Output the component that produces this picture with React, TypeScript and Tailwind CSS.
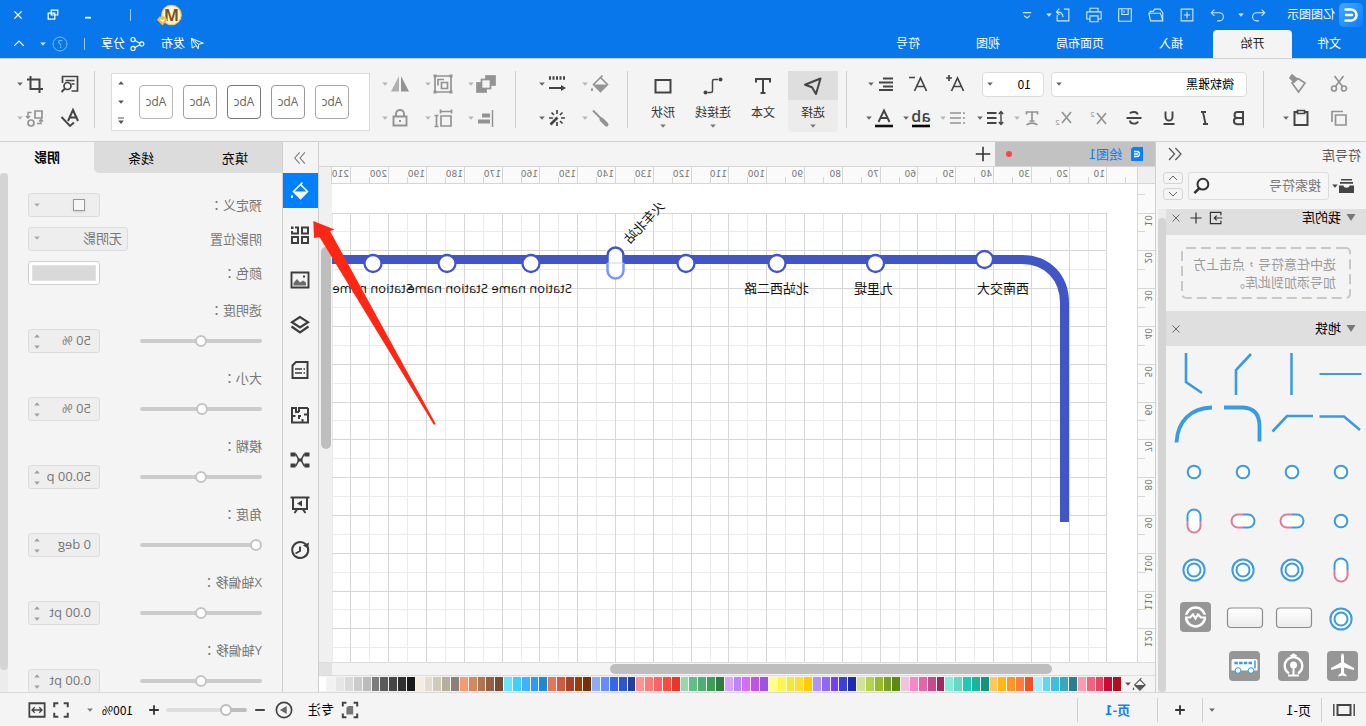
import React from 'react';

type Kids = { children?: React.ReactNode; className?: string };

const Ico = ({ children, className = 'size-5' }: Kids) => (
  <svg viewBox="0 0 20 20" fill="none" stroke="currentColor" strokeWidth="1.7" className={`shrink-0 overflow-visible ${className}`} aria-hidden="true">
    {children}
  </svg>
);

const Caret = ({ className = '' }: { className?: string }) => (
  <svg viewBox="0 0 8 8" className={`size-2 shrink-0 ${className}`} fill="currentColor" aria-hidden="true">
    <path d="M1.2 2.5h5.6L4 5.8z" />
  </svg>
);

const Colon = () => <span className="font-['Noto_Sans_CJK_TC']">：</span>;

const Tool = ({ label, caret, off, children }: { label: string; caret?: boolean; off?: boolean; children: React.ReactNode }) => (
  <button type="button" aria-label={label} className={`flex h-5 items-center gap-px ${off ? 'text-[#939393]' : 'text-[#444]'}`}>
    <Ico>{children}</Ico>
    {caret && <Caret className={off ? 'text-[#b5b5b5]' : 'text-[#666]'} />}
  </button>
);

const Sep = ({ className = '' }: { className?: string }) => <div className={`h-[57px] w-px shrink-0 bg-[#cfcfcf] ${className}`} />;

const Bucket = () => (
  <>
    <path d="M9.5 3.5 2.5 10.5 9.5 17.5 16.5 10.5 7.5 1.5" strokeWidth="1.6" />
    <path d="M3 10.5h13l-6.500 6.500z" fill="currentColor" stroke="none" />
    <path d="M18 13.500c1.300 1.800 1.600 3.500 0 3.800-1.600-.3-1.300-2 0-3.800z" fill="currentColor" stroke="none" />
  </>
);

const Glyph = ({ children, size = 17, x = 10, y = 16, weight = 400 }: { children: React.ReactNode; size?: number; x?: number; y?: number; weight?: number }) => (
  <text x={x} y={y} fontSize={size} fontWeight={weight} textAnchor="middle" fill="currentColor" stroke="none">
    {children}
  </text>
);

function TitleBar() {
  return (
    <header className="shrink-0 border-b border-[#d3d3d3] bg-[#0877ec] text-xs text-white">
      <div className="flex h-[30px] items-center">
        <svg viewBox="0 0 24 24" className="ml-[3px] mr-1 size-6" aria-hidden="true">
          <defs>
            <linearGradient id="lg" x1="0" y1="1" x2="1" y2="0">
              <stop offset="0" stopColor="#0a7bff" />
              <stop offset="1" stopColor="#45a9ff" />
            </linearGradient>
          </defs>
          <rect width="24" height="24" rx="5" fill="url(#lg)" />
          <path d="M17.500 6.500h-5.500a5.500 5.500 0 0 0 0 11h5.500M11 12h6" fill="none" stroke="#fff" strokeWidth="2.600" strokeLinecap="round" />
        </svg>
        <h1 className="w-[68px]">亿图图示</h1>
        <div className="flex items-center text-[#d6e8fc]">
          <button type="button" aria-label="撤销" className="flex w-10 items-center gap-1">
            <Ico className="size-[18px]"><path d="M6 4 2.500 7.500 6 11M3 7.500h8.500a4.500 4.500 0 0 1 0 9H9" strokeWidth="1.200" /></Ico>
            <Caret />
          </button>
          {[
            ['重做', 'M14 4l3.500 3.500L14 11M17 7.500H8.500a4.500 4.500 0 0 0 0 9H11'],
            ['新建', 'M3.500 3.500h13v13h-13zM10 6.500v7M6.500 10h7'],
            ['打开', 'M2.500 16.500v-9l3-4h6l1.500 2.500h3.500v2M2.500 16.500 5 8h13l-2 8.500z'],
            ['保存', 'M3 3h14v14H3zM6.500 3v6.500h7V3M11 5v2.500'],
            ['打印', 'M5.500 6.500v-4h9v4M5.500 14.500H2v-8h16v8h-3.500M5.500 11h9v6.500h-9z'],
            ['导出', 'M9 3.500H3.500v13h13V10M17.500 6.500 14 3M17.500 6.500 14 10M17 6.500c-4 0-7 1-7 6'],
          ].map(([name, d]) => (
            <button key={name} type="button" aria-label={name} className="w-[31px]">
              <Ico className="size-[18px]"><path d={d} strokeWidth="1.200" /></Ico>
            </button>
          ))}
          <Caret className="-ml-3" />
          <button type="button" aria-label="自定义快速访问" className="ml-3">
            <Ico className="size-3"><path d="M3 6h14M5 11l5 4 5-4" strokeWidth="2" /></Ico>
          </button>
        </div>
        <div className="ml-auto flex items-center">
          <svg viewBox="0 0 26 22" className="h-[22px] w-[26px]" aria-label="账户">
            <circle cx="10.500" cy="11" r="9.700" fill="#fff5dc" stroke="#f5ca6b" strokeWidth="1.300" />
            <text x="10.500" y="16.500" textAnchor="middle" fontSize="16" fontWeight="700" fill="#7c5518">M</text>
            <path d="M16.500 12.500h6l2.500 3.500-5.500 5.500-5-5.500z" fill="#f7b93c" />
            <path d="m17.500 15.500 2 2 2-2" fill="none" stroke="#fff" strokeWidth="1.200" />
          </svg>
          <span className="ml-[25px] h-3 w-px bg-[#9cc9f8]" />
          <button type="button" aria-label="最小化" className="ml-[36px]"><Ico className="size-3"><path d="M5 14.500h10" strokeWidth="3" /></Ico></button>
          <button type="button" aria-label="还原" className="ml-[23px]"><Ico className="size-3"><path d="M2 2h11v8H2zM7 7h11v10H7z" strokeWidth="2" /></Ico></button>
          <button type="button" aria-label="关闭" className="mr-3 ml-[23px]"><Ico className="size-3"><path d="m4 4 12 12M16 4 4 16" strokeWidth="2.200" /></Ico></button>
        </div>
      </div>
      <nav className="flex h-7 items-center">
        <a href="#file" className="w-[74px] text-center">文件</a>
        <a href="#home" className="flex h-full w-[79px] items-center justify-center rounded-t-sm bg-[#f4f4f4] text-[#222]">开始</a>
        <a href="#insert" className="w-[84px] text-center">插入</a>
        <a href="#layout" className="w-[98px] text-center">页面布局</a>
        <a href="#view" className="w-[86px] text-center">视图</a>
        <a href="#symbol" className="w-[74px] text-center">符号</a>
        <div className="ml-auto flex items-center">
          <button type="button" className="flex items-center gap-1">
            <Ico className="size-4"><path d="M2 9 17 3l-1 12-5-3-2.500 4-.5-5.500zM17 3l-9 7.500M11 12l6-9" strokeWidth="1.200" /></Ico>发布
          </button>
          <button type="button" className="ml-3 flex items-center gap-1">
            <Ico className="ml-1 size-4"><circle cx="4" cy="10" r="2.600" strokeWidth="1.400" /><circle cx="15" cy="4.500" r="2.600" strokeWidth="1.400" /><circle cx="15" cy="15.500" r="2.600" strokeWidth="1.400" /><path d="m6.500 9 6-3.300M6.500 11l6 3.300" strokeWidth="1.400" /></Ico>分享
          </button>
          <span className="ml-4 h-3 w-px bg-[#9cc9f8]" />
          <button type="button" aria-label="帮助" className="ml-4 flex items-center gap-[5px] text-[#d6e8fc]">
            <svg viewBox="0 0 16 16" className="size-4" fill="none" stroke="#7db9f6"><circle cx="8" cy="8" r="7" /><text x="8" y="12" textAnchor="middle" fontSize="10" fill="#a8d0f8" stroke="none">?</text></svg>
            <Caret />
          </button>
          <button type="button" aria-label="收起" className="mr-[13px] ml-[14px]"><Ico className="size-3"><path d="m2 13 8-8 8 8" strokeWidth="2" /></Ico></button>
        </div>
      </nav>
    </header>
  );
}

const BigTool = ({ label, caret = true, active, children }: { label: string; caret?: boolean; active?: boolean; children: React.ReactNode }) => (
  <button type="button" className={`flex h-[61px] w-[50px] flex-col items-center rounded-sm text-xs text-[#333] ${active ? 'bg-[#ececec]' : ''}`}>
    <span className={`flex h-[29px] w-full shrink-0 items-center justify-center text-[#444] ${active ? 'bg-[#dedede]' : ''}`}><Ico>{children}</Ico></span>
    <span className="mt-1 leading-[18px]">{label}</span>
    {caret && <Caret className="text-[#777]" />}
  </button>
);

function Ribbon() {
  return (
    <div className="flex h-[83px] shrink-0 items-start border-b border-[#d0d0d0] bg-[#f4f4f4] pt-3">
      <div className="flex flex-col gap-[11px] pl-[17px]">
        <div className="flex h-[26px] items-center gap-[21px]">
          <Tool label="剪切" off><circle cx="5" cy="14.500" r="2.500" /><circle cx="15" cy="14.500" r="2.500" /><path d="m6.500 12.500 8-10.500M13.500 12.500l-8-10.500" /></Tool>
          <Tool label="格式刷" off><path d="m3 9 7-4.500 6 4.500-6.500 9z" /><path d="m11 5 5-4 2 3-4 4z" fill="currentColor" /></Tool>
        </div>
        <div className="flex items-center gap-[18px]">
          <Tool label="复制" off><path d="M3 7h10.500v10H3zM6 3.500h11v10.500" /></Tool>
          <Tool label="粘贴" caret><path d="M6.500 4H3.500v13h13V4h-3" strokeWidth="2" /><path d="M6.500 2.500h7v3h-7z" /></Tool>
        </div>
      </div>
      <Sep className="ml-[18px]" />
      <div className="ml-4 flex flex-col gap-[11px]">
        <div className="flex h-[26px] items-center">
          <div className="relative w-[196px]">
            <select aria-label="字体" className="h-[25px] w-full appearance-none rounded-sm border border-[#dcdcdc] bg-white pl-3 text-xs text-black"><option>微软雅黑</option></select>
            <Caret className="absolute top-[9px] right-1 text-[#666]" />
          </div>
          <div className="relative ml-[7px] w-[62px]">
            <select aria-label="字号" className="h-[25px] w-full appearance-none rounded-sm border border-[#dcdcdc] bg-white pl-3 font-['Noto_Sans_CJK_SC'] text-xs text-black"><option>10</option></select>
            <Caret className="absolute top-[9px] right-1 text-[#666]" />
          </div>
          <div className="ml-[17px] flex gap-[17px]">
            <Tool label="增大字号"><path d="M1.500 17 7.500 4l6 13M4 12.500h7.500M13 4h6M16 1v6" /></Tool>
            <Tool label="减小字号"><path d="M1.500 17 7.500 4l6 13M4 12.500h7.500M13 3.500h6" /></Tool>
          </div>
          <div className="ml-3"><Tool label="对齐" caret><path d="M3 4.500h10M3 8.500h14M3 12.500h10M3 16h14" strokeWidth="1.900" /></Tool></div>
        </div>
        <div className="flex items-center">
          <div className="ml-[-2px] flex gap-[15px]">
            <Tool label="加粗"><path d="M6 4h5.500a2.700 2.700 0 0 1 0 6H6zM6 10h6a3 3 0 0 1 0 6.200H6z" strokeWidth="2" /></Tool>
            <Tool label="斜体"><path d="M8 4h5M6 16h5M11 4l-2.500 12" strokeWidth="1.900" /></Tool>
            <Tool label="下划线"><path d="M6.500 3.500V9a3.500 3.500 0 0 0 7 0V3.500M4.500 16h11" strokeWidth="1.900" /></Tool>
            <Tool label="删除线"><path d="M14 5.500C13 3.500 6.500 3 6.500 6.500M2.500 10h15M6 13.500c1 3 8 3 8-1" strokeWidth="1.900" /></Tool>
            <Tool label="上标" off><path d="m3 5 9 11M12 5 3 16" /><Glyph size={8} x={16.500} y={9}>2</Glyph></Tool>
            <Tool label="下标" off><path d="m3 4 9 11M12 4 3 15" /><Glyph size={8} x={16.500} y={17}>2</Glyph></Tool>
          </div>
          <div className="ml-3 flex gap-2">
            <Tool label="文字效果" caret off><path d="M4.500 6.500V4h11v2.500M10 4v9M7.500 13h5M4.500 17c2.500-2.500 8.500-2.500 11 0" /></Tool>
            <Tool label="行距" caret><path d="M8.500 5H18M8.500 10H18M8.500 15H18" strokeWidth="2" /><path d="M4 3.500v13M1.800 6 4 3.500 6.200 6M1.800 14 4 16.500 6.200 14" strokeWidth="1.400" /></Tool>
            <Tool label="项目符号" caret off><path d="M7 5h11M7 10h11M7 15h11" /><path d="M3 5h2M3 10h2M3 15h2" /></Tool>
            <Tool label="突出显示" caret><Glyph size={16} y={14} weight={600}>ab</Glyph><path d="M1 18h18" stroke="#000" strokeWidth="2.600" /></Tool>
            <Tool label="字体颜色" caret><path d="M4.500 14 10 2.500 15.500 14M6.500 10h7" strokeWidth="1.900" /><path d="M1 18h18" stroke="#111" strokeWidth="2.600" /></Tool>
          </div>
        </div>
      </div>
      <Sep className="ml-[18px]" />
      <div className="ml-2 flex">
        <BigTool label="选择" active><path d="m2.500 2.500 15.500 6.200-7 2.500L7 18z" strokeWidth="2" strokeLinejoin="round" /></BigTool>
        <BigTool label="文本" caret={false}><path d="M3 6.500V3h14v3.500M10 3v14M7.500 17h5" strokeWidth="2" /></BigTool>
        <BigTool label="连接线"><path d="M5 3.500h4q1.500 0 1.500 1.500v10q0 1.500 1.500 1.500h3.500" strokeWidth="1.500" /><circle cx="2.500" cy="3.500" r="2" fill="currentColor" stroke="none" /><circle cx="17.500" cy="16.500" r="2" fill="currentColor" stroke="none" /></BigTool>
        <BigTool label="形状"><path d="M2.500 4h15v12.500h-15z" strokeWidth="2" /></BigTool>
      </div>
      <Sep className="ml-[10px]" />
      <div className="ml-[17px] flex flex-col gap-[11px]">
        <div className="flex h-[26px] items-center gap-[14px]">
          <Tool label="填充" caret off><Bucket /></Tool>
          <Tool label="线条样式" caret><path d="M2 4h16" strokeWidth="3.500" strokeDasharray="2 1.500" /><path d="M5 14h13" strokeWidth="2" /><path d="m1 14 5-3v6z" fill="currentColor" stroke="none" /></Tool>
        </div>
        <div className="flex items-center gap-[14px]">
          <Tool label="线条" caret off><path d="M17 2.500 8 11.500" strokeWidth="2" /><path d="m3.500 16.500 5-5" strokeWidth="4" strokeLinecap="round" /></Tool>
          <Tool label="美化" caret><path d="M10 2v4M10 14v4M2 10h4M14 10h4M4.500 4.500l2.500 2.500M15.500 4.500 13 7M4.500 15.500 7 13" /><path d="m9.500 9.500 7 7" strokeWidth="2.600" /></Tool>
        </div>
      </div>
      <Sep className="ml-[22px]" />
      <div className="ml-[19px] flex flex-col gap-[11px]">
        <div className="flex h-[26px] items-center gap-[14px]">
          <Tool label="排列" caret off><rect x="1" y="2" width="9" height="9" fill="currentColor" /><rect x="10" y="9" width="9" height="9" fill="currentColor" /><rect x="5.500" y="5.500" width="9" height="9" fill="#f4f4f4" /></Tool>
          <Tool label="组合" caret off><path d="M2 2h16v16H2zM5.500 8.500h6v6h-6zM9 5.500h6v6" /><path d="M.5.500h3v3h-3zM16.500.500h3v3h-3zM.5 16.500h3v3h-3zM16.500 16.500h3v3h-3z" fill="currentColor" stroke="none" /></Tool>
          <Tool label="翻转" caret off><path d="M9 2v15.500H1z" fill="currentColor" stroke="none" /><path d="M11 2v15.500h8z" fill="currentColor" stroke="none" opacity=".7" /></Tool>
        </div>
        <div className="flex items-center gap-[14px]">
          <Tool label="对齐" caret off><path d="M3.500 2v17" strokeWidth="1.500" /><path d="M6 7.500h8M6 13.500h12" strokeWidth="4" /></Tool>
          <Tool label="大小" caret off><path d="M2 8h10v10H2zM1.500 3.500h11M1.500 1.500v4M12.500 1.500v4M16.500 7.500v11M14.500 7.500h4M14.500 18.500h4" /></Tool>
          <Tool label="锁定" caret off><path d="M3.500 8.500h13v9h-13zM6 8.500V5.500a4 3.500 0 0 1 8 0v3" strokeWidth="1.900" /><path d="M9 12h2v2H9z" fill="currentColor" stroke="none" /></Tool>
        </div>
      </div>
      <div className="mt-[2px] ml-[11px] flex h-[58px] flex-1 items-center border border-[#dcdcdc] bg-white pl-5">
        <div className="flex gap-[10px]">
          {['border-[#a8a8a8]', 'border-[#999]', 'border-[#777]', 'border-[#a0a0a0]', 'border-[#b5b5b5]'].map((c) => (
            <button key={c} type="button" className={`size-[34px] rounded-[4px] border text-xs text-[#666] ${c}`}>Abc</button>
          ))}
        </div>
        <div className="mr-[5px] ml-auto flex flex-col gap-[11px] text-[#555]">
          <Caret className="rotate-180" />
          <Caret />
          <svg viewBox="0 0 8 8" className="size-2" fill="currentColor"><path d="M1 .5h6v1H1zM1.200 3.500h5.600L4 7z" /></svg>
        </div>
      </div>
      <Sep className="ml-4" />
      <div className="mr-[16px] ml-[14px] flex flex-col gap-[11px]">
        <div className="flex h-[26px] items-center gap-[15px]">
          <Tool label="查找"><path d="M17.500 9V2.500h-15v14.500h6M5.500 6.500h9M5.500 10h3" /><circle cx="12.500" cy="12" r="3.500" /><path d="m15 14.500 3.500 3.500" strokeWidth="2" /></Tool>
          <Tool label="裁剪" caret><path d="M2 15h12.500V2M5.500 19V5.500H18" strokeWidth="2" /></Tool>
        </div>
        <div className="flex items-center gap-[15px]">
          <Tool label="拼写检查"><path d="m2 13 5-11 5 11M4 9.500h6" strokeWidth="2" /><path d="m6 14.500 4 3.500 8.500-9" strokeWidth="1.900" /></Tool>
          <Tool label="替换" caret off><path d="M3 3h7v7H3z" /><circle cx="14" cy="15" r="3" /><path d="M13.500 4.500H17v5M15 8l2 2 2-2M8 15.500H4V12M2 13.500l2-2 2 2" strokeWidth="1.400" /></Tool>
        </div>
      </div>
    </div>
  );
}

const B = '#3a9be0';
const P = '#e07a9c';
const Ring = () => <circle cx="24" cy="24" r="6.300" fill="#fff" stroke={B} strokeWidth="2" />;
const Double = () => (<><circle cx="24" cy="24" r="10.600" fill="#fff" stroke={B} strokeWidth="2" /><circle cx="24" cy="24" r="6.500" fill="#fff" stroke={B} strokeWidth="2" /></>);
const PillH = () => (<><path d="M24 17.500h-5a6.500 6.500 0 0 0 0 13h5" fill="#fff" stroke={B} strokeWidth="2" /><path d="M24 17.500h5a6.500 6.500 0 0 1 0 13h-5" fill="#fff" stroke={P} strokeWidth="2" /></>);
const PillV = () => (<><path d="M17.500 24v-5a6.500 6.500 0 0 1 13 0v5" fill="#fff" stroke={B} strokeWidth="2" /><path d="M17.500 24v5a6.500 6.500 0 0 0 13 0v-5" fill="#fff" stroke={P} strokeWidth="2" /></>);
const Poly = ({ d, w = 2.6 }: { d: string; w?: number }) => <path d={d} fill="none" stroke={B} strokeWidth={w} />;
const Plate = () => (<><rect x="4.500" y="13" width="35" height="19.500" rx="3.500" fill="url(#plate)" stroke="#8c8c8c" strokeWidth="1.200" /></>);
const Tile = ({ children }: Kids) => (<><rect x="7" y="7" width="31" height="30" rx="4" fill="#969696" />{children}</>);

const SYMBOLS: [string, React.ReactNode][] = [
  ['横线', <Poly d="M3.500 24h42" w={2} />],
  ['竖线', <Poly d="M24.500 3v42" w={2.500} />],
  ['上折线', <Poly d="M31 45V20L16 4" />],
  ['下折线', <Poly d="M32 3v29L16 43" />],
  ['右折线', <Poly d="M45.500 17.500H21L5 31" />],
  ['左折线', <Poly d="M43.500 32.500 29 17H3" />],
  ['圆角线', <Poly d="M43 8.500H24Q7.500 9.500 7.500 27v15.500" w={3.800} />],
  ['弧线', <Poly d="M41.500 43.500C40.500 22 27 9 6 8.500" w={3.800} />],
  ['站点一', <Ring />], ['站点二', <Ring />], ['站点三', <Ring />], ['站点四', <Ring />], ['站点五', <Ring />],
  ['换乘站一', <PillH />], ['换乘站二', <PillH />], ['换乘站三', <PillV />], ['换乘站四', <PillV />],
  ['双环一', <Double />], ['双环二', <Double />], ['双环三', <Double />], ['双环四', <Double />],
  ['标牌一', <Plate />], ['标牌二', <Plate />],
  ['地铁一', <Tile><circle cx="22.500" cy="22" r="9.500" fill="none" stroke="#fff" strokeWidth="2.500" /><path d="M10 21.500h5M30 21.500h5" stroke="#969696" strokeWidth="3.500" /><path d="M12 22.500h5l3-3 2.500 4 2.500-4 3 3h5" fill="none" stroke="#fff" strokeWidth="2.200" /></Tile>],
  ['机场', <Tile><path d="M22.500 9.500c1.200 0 1.500 2 1.500 4v5l10 5.500v2l-10-2.500v5.500l2.500 2v1.500l-4-1-4 1v-1.500l2.500-2v-5.500l-10 2.500v-2l10-5.500v-5c0-2 .3-4 1.500-4z" fill="#fff" /></Tile>],
  ['地铁二', <Tile><path d="M18 29.500a8.800 8.800 0 1 1 9 0M19.500 12.500l3-1.800 3 1.800" fill="none" stroke="#fff" strokeWidth="2.300" /><circle cx="22.500" cy="21" r="3.500" fill="#fff" /><path d="M21.500 23h2v8h-2zM17 30.500h11v2H17z" fill="#fff" /></Tile>],
  ['公交', <Tile><path d="M9.500 17q0-2 2-2h22q2 0 2 2v9.500h-26z" fill="#fff" /><path d="M12 16.500v8" stroke={B} strokeWidth="1.500" /><path d="M15 19h18" stroke={B} strokeWidth="2.500" strokeDasharray="3.500 1.200" /><circle cx="16" cy="26.500" r="2.800" fill="#fff" stroke={B} /><circle cx="29" cy="26.500" r="2.800" fill="#fff" stroke={B} /></Tile>],
];

const SectionHead = ({ title, className, children }: { title: string; className: string; children?: React.ReactNode }) => (
  <div className={`flex items-center bg-[#dfdfdf] pr-[3px] pl-[10px] text-[13px] text-black ${className}`}>
    <svg viewBox="0 0 10 10" className="mr-[5px] size-[10px]" fill="#777"><path d="M.5 1h9L5 8z" /></svg>
    <h3>{title}</h3>
    <div className="ml-auto flex items-center gap-[6px] text-[#333]">
      {children}
      <button type="button" aria-label="关闭"><Ico className="size-[14px] text-[#666]"><path d="m5 5 10 10M15 5 5 15" strokeWidth="1.400" /></Ico></button>
    </div>
  </div>
);

function Library() {
  return (
    <aside className="flex w-[211px] shrink-0 flex-col border-r border-[#cfcfcf] bg-[#f4f4f4] text-[13px]">
      <div className="flex h-[30px] items-start justify-between pt-1 pr-[11px] pl-[5px] text-[#555]">
        <h2 className="text-[13px]">符号库</h2>
        <button type="button" aria-label="收起面板"><Ico className="size-4"><path d="m9.500 2.500-7 7.500 7 7.500M17.500 2.500l-7 7.500 7 7.500" strokeWidth="1.500" /></Ico></button>
      </div>
      <div className="flex items-center pr-[7px] pl-3">
        <button type="button" aria-label="库列表" className="flex w-[25px] items-center text-[#444]">
          <svg viewBox="0 0 15 15" className="size-[15px]" fill="currentColor"><path d="M2 0h11v1.600H2zM1 3h13v1.800H1zM0 6.500h4.500c0 3 6 3 6 0H15V14H0z" /></svg>
          <Caret />
        </button>
        <label className="flex h-7 w-[141px] items-center rounded-[3px] border border-[#dcdcdc] bg-[#f6f6f6] pr-1 pl-[7px]">
          <input aria-label="搜索符号" placeholder="搜索符号" className="min-w-0 flex-1 bg-transparent text-[13px] outline-none placeholder:text-[#757575]" />
          <Ico className="size-[18px] text-[#333]"><circle cx="9" cy="8" r="6" strokeWidth="2.200" /><path d="m13 12.500 5.500 5.500" strokeWidth="2.800" /></Ico>
        </label>
        <div className="ml-auto flex flex-col gap-1 text-[#666]">
          <button type="button" aria-label="上一个" className="flex h-3 w-5 items-center justify-center rounded-[3px] border border-[#d5d5d5]"><Ico className="size-[10px]"><path d="m2 14 8-8 8 8" strokeWidth="2" /></Ico></button>
          <button type="button" aria-label="下一个" className="flex h-3 w-5 items-center justify-center rounded-[3px] border border-[#d5d5d5]"><Ico className="size-[10px]"><path d="m2 6 8 8 8-8" strokeWidth="2" /></Ico></button>
        </div>
      </div>
      <div className="mt-[9px] flex min-h-0 flex-1 pr-[2px]">
        <div className="min-w-0 flex-1 overflow-hidden">
          <SectionHead title="我的库" className="h-[26px] pb-2">
            <button type="button" aria-label="导入"><Ico className="size-[14px]"><path d="M3 6V2h15v16H3v-4M1 10h11M9 6.500l3.500 3.500L9 13.500" /></Ico></button>
            <button type="button" aria-label="新增"><Ico className="size-[14px]"><path d="M10 2v16M2 10h16" /></Ico></button>
          </SectionHead>
          <div className="relative mx-[15px] mt-3 mb-3 h-[52px] pt-2 pl-[15px] leading-[18px] whitespace-nowrap text-[#9a9a9a]">
            <svg className="absolute inset-0 h-full w-full" fill="none" aria-hidden="true"><rect x="1" y="1" width="168" height="50" rx="4" stroke="#c8c8c8" strokeWidth="2" strokeDasharray="10 5" /></svg>
            <p>选中任意符号<span className="font-['Noto_Sans_CJK_TC']">，</span>点击上方<br />加号添加到此库。</p>
          </div>
          <SectionHead title="地铁" className="h-[35px]" />
          <svg className="absolute size-0" aria-hidden="true"><defs><linearGradient id="plate" x1="0" y1="0" x2="0" y2="1"><stop offset="0" stopColor="#fff" /><stop offset="1" stopColor="#ececec" /></linearGradient></defs></svg>
          <div className="mt-1 grid grid-cols-[repeat(4,49px)] pl-px">
            {SYMBOLS.map(([name, art]) => (
              <button key={name} type="button" aria-label={name} className="size-[49px]">
                <svg viewBox="0 0 49 49" className="size-[49px]">{art}</svg>
              </button>
            ))}
          </div>
        </div>
        <div className="w-2 shrink-0 bg-[#ececec] pt-[9px]"><div className="h-full rounded-full bg-[#d4d4d4]" /></div>
      </div>
    </aside>
  );
}

const STEP = 37.8;
const range = (n: number) => Array.from({ length: n }, (_, i) => i);
const LINE = '#4155c6';

function Diagram() {
  return (
    <svg className="h-full w-full bg-white font-['Open_Sans','Noto_Sans_CJK_SC',sans-serif]" fontSize="13" fill="#111">
      <g shapeRendering="crispEdges">
        {range(26).map((i) => (<line key={i} x1={Math.floor(30 + (i + 0.5) * STEP) + 0.5} x2={Math.floor(30 + (i + 0.5) * STEP) + 0.5} y1="29" y2="100%" stroke="#ebebeb" />))}
        {range(26).map((i) => (<line key={i} y1={Math.floor(29 + (i + 0.5) * STEP) + 0.5} y2={Math.floor(29 + (i + 0.5) * STEP) + 0.5} x1="30" x2="100%" stroke="#ebebeb" />))}
        {range(26).map((i) => (<line key={i} x1={Math.floor(30 + i * STEP) + 0.5} x2={Math.floor(30 + i * STEP) + 0.5} y1="29" y2="100%" stroke="#d6d6d6" />))}
        {range(26).map((i) => (<line key={i} y1={Math.floor(29 + i * STEP) + 0.5} y2={Math.floor(29 + i * STEP) + 0.5} x1="30" x2="100%" stroke="#d6d6d6" />))}
      </g>
      <path d="M1400 75.500H115C90 75.500 72.500 93 72.500 119v219" fill="none" stroke={LINE} strokeWidth="9" />
      {[[152.5, 75.5], [261.5, 79.5], [360, 79.5], [451, 79.5], [606, 79.5], [690, 79.5], [764, 79.5]].map(([x, y]) => (
        <circle key={x} cx={x} cy={y} r="8.500" fill="#fff" stroke={LINE} strokeWidth="2.300" />
      ))}
      <path d="M513.500 79V71.500a8 8 0 0 1 16 0V79" fill="#fff" stroke={LINE} strokeWidth="2.500" />
      <path d="M513.500 79v7.500a8 8 0 0 0 16 0V79" fill="#fff" stroke="#7a95ff" strokeWidth="2.500" />
      <path d="M513.500 79h16" stroke="#c9d2f5" />
      <text x="108" y="109">西南交大</text>
      <text x="244" y="109">九里堤</text>
      <text x="328" y="109">北站西二路</text>
      <text x="565" y="109">Station name</text>
      <text x="649" y="109">Station name</text>
      <text x="724" y="109">Station name</text>
      <text x="493" y="43" textAnchor="middle" transform="rotate(46.500 493 38)">火车北站</text>
    </svg>
  );
}

const PALETTE = (
  'b00f1e cf0a30 e84362 f6617f fa9cb0 28808f 37a8c2 3dc0e0 5cd8f0 a8f0ff f55024 ff7d3a ff961f ffb617 ffc763 109680 18b59c 1ccbb4 66d8c5 85ecdc ' +
  '9c2b60 c74b8b e566a8 fa86c6 f0c4de 5f8a12 77a028 97bc25 b4d24e d3e294 1f2aac 3a40d8 7242f0 9068f8 ae94f8 fdcb00 fcdd30 f3ea2a faf74e ffff86 ' +
  '9f52e0 c452e8 d56cfa be84fc dba4fc 2f7d41 3ba055 4fae74 62bd87 94d9ae e8362b ff493c fd6365 ff7a7a ff9390 243fa0 2c55cf 3367f0 668bff 8aaef5 ' +
  '7a2e04 9c3b04 a64228 d05a3e e27658 188ad8 2b9bf5 43b0ff 3bd0ff 68e4ff 784c34 955e42 b37350 d5875e f59b6e 8c8078 b4ae9c ceccb9 e4dccd f4eedb ' +
  '1a1a1a 303030 464646 5a5a5a 7d7d7d bcbcbc cbcbcb dadada e6e6e6 f2f2f2 ffffff'
).split(' ');

function Workspace() {
  return (
    <main className="flex min-w-0 flex-1 flex-col bg-[#f4f4f4]">
      <div className="flex h-6 shrink-0 items-center">
        <div className="flex h-full w-40 items-center bg-[#c2c2c2] pr-[11px] pl-3 text-[13px] text-[#0a80f5]">
          <svg viewBox="0 0 12 14" className="mr-[9px] h-[14px] w-3"><path d="M0 0h10l2 2v12H0z" fill="#0a80ff" /><path d="M9 4.500H6a2.500 2.500 0 0 0 0 5h3M5 7h4" fill="none" stroke="#fff" strokeWidth="1.300" /></svg>
          <a href="#drawing1" className="font-['Noto_Sans_CJK_SC']">绘图1</a>
          <span className="ml-auto size-[6px] rounded-full bg-[#fb4444]" />
        </div>
        <button type="button" aria-label="新建绘图" className="ml-1 text-[#333]"><Ico className="size-4"><path d="M10 1v18M1 10h18" strokeWidth="2" /></Ico></button>
      </div>
      <div className="flex h-[18px] shrink-0 border-t border-[#d6d6d6]">
        <div className="w-[18px] shrink-0 border-r border-b border-[#d6d6d6] bg-[#efefef]" />
        <svg className="h-full min-w-0 flex-1 border-b border-[#d6d6d6] bg-[#fafafa] font-['DejaVu_Sans']" fontSize="9" fill="#777">
          {range(21).map((i) => (
            <g key={i}>
              <path d={`M${Math.floor(30 + i * STEP) + 0.5} 0v17`} stroke="#d6d6d6" />
              <path d={`M${Math.floor(30 + (i - 0.5) * STEP) + 0.5} 10v7`} stroke="#d6d6d6" />
              <text x={Math.floor(30 + i * STEP) + 2} y="10">{(i + 1) * 10}</text>
            </g>
          ))}
        </svg>
        <div className="w-[13px] shrink-0 border-l border-[#d6d6d6] bg-[#f0f0f0]" />
      </div>
      <div className="flex min-h-0 flex-1">
        <svg className="h-full w-[18px] shrink-0 border-r border-[#d6d6d6] bg-[#fafafa] font-['DejaVu_Sans']" fontSize="9" fill="#777">
          {range(12).map((i) => (
            <g key={i}>
              <path d={`M0 ${Math.floor(29 + i * STEP) + 0.5}h18`} stroke="#d6d6d6" />
              <path d={`M10 ${Math.floor(29 + (i - 0.5) * STEP) + 0.5}h8`} stroke="#d6d6d6" />
              <text textAnchor="end" transform={`translate(10 ${Math.floor(29 + i * STEP) + 2}) rotate(-90)`}>{(i + 1) * 10}</text>
            </g>
          ))}
        </svg>
        <div className="min-w-0 flex-1"><Diagram /></div>
        <div className="w-[13px] shrink-0 bg-[#f0f0f0] px-px pt-[63px]"><div className="h-[202px] w-[10px] rounded-full bg-[#bebebe]" /></div>
      </div>
      <div className="flex h-[14px] shrink-0 border-y border-[#dcdcdc]">
        <div className="flex-1 pl-[103px]"><div className="mt-px h-[10px] w-[442px] rounded-full bg-[#bebebe]" /></div>
        <div className="w-[13px] bg-[#e2e2e2]" />
      </div>
      <div className="flex h-4 shrink-0 items-center pl-2 text-[#555]">
        <Ico className="size-[15px]"><Bucket /></Ico>
        <Caret className="mr-[3px]" />
        <div className="flex h-[14px] flex-1 gap-px">
          {PALETTE.map((c) => (<button key={c} type="button" aria-label={`#${c}`} className="min-w-0 flex-1" style={{ backgroundColor: `#${c}` }} />))}
        </div>
      </div>
    </main>
  );
}

function Rail() {
  return (
    <nav className="flex w-[37px] shrink-0 flex-col items-center border-x border-[#cfcfcf] bg-[#f4f4f4] text-[#3d3d3d]">
      <button type="button" aria-label="收起面板" className="flex h-[31px] items-center text-[#777]"><Ico className="size-[14px]"><path d="m3 2 7 8-7 8M10.500 2l7 8-7 8" strokeWidth="1.500" /></Ico></button>
      <button type="button" aria-label="样式" className="flex h-[35px] w-full shrink-0 items-center justify-center bg-[#0080ff] text-white"><Ico><Bucket /></Ico></button>
      <div className="mt-1 flex flex-col items-center">
        {[
          ['组件', <><path d="M2 12h6v6H2zM12 12h6v6h-6zM2 2.500h6v6H2zM18 6v2.500h-6v-6h3" strokeWidth="2" /><path d="M16.500 1.500h2.500V4h-2.500z" fill="currentColor" stroke="none" /></>],
          ['图片', <><path d="M1.500 2.500h17v15h-17z" strokeWidth="1.900" /><path d="M4 15.500v-3l3-2 3 2 3-3.500 3.500 4v2.500z" fill="currentColor" stroke="none" opacity=".75" /><path d="M5 5.500h2v2H5z" fill="currentColor" stroke="none" /></>],
          ['图层', <path d="m10 2 8 5.200-8 5.300L2 7.200zM1.500 11.500 10 17.500l8.500-6" strokeWidth="2.200" />],
          ['页面', <><path d="M2.500 2h11.500l3.500 3.500V18h-15z" strokeWidth="2" /><path d="M5 9h1.500M5 13h1.500M8 9h7M8 13h7" /></>],
          ['布局', <path d="M2 3h9v4M11 11v3M2 3v14.500h16V3h-4v4h-3M2 9.500h4M9 11h3M14.500 11H18M7.500 17v-3" strokeWidth="2" />],
          ['导图', <><path d="M4 4.500h2l3 5.500h2l3-5.500h2M4 15.500h2L9 10h2l3 5.500h2" strokeWidth="1.500" /><path d="M.5 2.500h5v4h-5zM14.500 2.500h5v4h-5zM.5 13.500h5v4h-5zM14.500 13.500h5v4h-5zM7.500 8.500h5v3h-5z" fill="currentColor" stroke="none" /></>],
          ['演示', <><path d="M.5 2.500h19M3 3v11h14V3M7 14.500l-2.500 3.500M13 14.500l2.500 3.500" strokeWidth="2" /><path d="M8 5.500v6l5-3z" fill="currentColor" stroke="none" /></>],
          ['历史', <><path d="M3.500 5A8 8 0 1 0 10 2M10 2a8 8 0 0 0-6 2.500" strokeWidth="2" /><path d="m1 2.500 1 6 5-3z" fill="currentColor" stroke="none" /><path d="M10 6.500V11l4.500 2.500" strokeWidth="1.900" /></>],
        ].map(([name, art]) => (
          <button key={name as string} type="button" aria-label={name as string} className="flex h-[45px] items-center"><Ico>{art}</Ico></button>
        ))}
      </div>
    </nav>
  );
}

const field = 'rounded-[3px] border border-[#dcdcdc] bg-[#eeeeee]';

function Slider({ id, label, value, at }: { id: string; label: string; value: string; at: number }) {
  return (
    <div className="h-[68px]">
      <label htmlFor={id} className="block leading-[20px]">{label}<Colon /></label>
      <div className="mt-[9px] flex h-6 items-center justify-between">
        <input id={id} type="range" defaultValue={at} className="h-1 w-[122px] appearance-none rounded-full bg-[#cccccc] [&::-webkit-slider-thumb]:size-3 [&::-webkit-slider-thumb]:appearance-none [&::-webkit-slider-thumb]:rounded-full [&::-webkit-slider-thumb]:border-2 [&::-webkit-slider-thumb]:border-[#c4c4c4] [&::-webkit-slider-thumb]:bg-white" />
        <div className={`flex h-6 w-[72px] items-center justify-between pr-[4px] pl-2 ${field}`}>
          <input aria-label={`${label}数值`} defaultValue={value} className="w-[46px] bg-transparent text-[13px] outline-none" />
          <span className="flex flex-col gap-[3px] text-[#a0a0a0]"><Caret className="rotate-180" /><Caret /></span>
        </div>
      </div>
    </div>
  );
}

function Inspector() {
  return (
    <aside className="flex w-[282px] shrink-0 flex-col bg-[#f4f4f4] text-[13px] text-[#777]">
      <div role="tablist" className="grid h-[31px] shrink-0 grid-cols-3 text-black">
        <button type="button" role="tab" className="bg-[#dcdcdc] pt-[3px]">填充</button>
        <button type="button" role="tab" className="rounded-br-[5px] bg-[#dcdcdc] pt-[3px]">线条</button>
        <button type="button" role="tab" aria-selected="true" className="font-bold">阴影</button>
      </div>
      <div className="flex min-h-0 flex-1">
        <div className="min-w-0 flex-1 overflow-hidden pt-4 pr-[20px] pl-5">
          <div className="grid grid-cols-[1fr_100px] gap-y-[10px]">
            <span className="pt-[6px] leading-[20px]">预定义<Colon /></span>
            <button type="button" aria-label="预定义" className={`mt-1 ml-7 flex h-6 items-center justify-between pr-1 pl-[14px] ${field}`}>
              <span className="size-3 border border-[#999] bg-[#f6f6f6] shadow-sm" /><Caret className="text-[#aaa]" />
            </button>
            <label htmlFor="pos" className="pt-[2px] leading-[20px]">阴影位置</label>
            <div className="relative">
              <select id="pos" className={`h-6 w-full appearance-none pl-[5px] text-[13px] ${field}`}><option>无阴影</option></select>
              <Caret className="absolute top-[7px] right-[5px] text-[#aaa]" />
            </div>
            <span className="pt-[2px] leading-[20px]">颜色<Colon /></span>
            <button type="button" aria-label="颜色" className="ml-7 h-6 rounded-[3px] border border-[#cfcfcf] bg-white p-[3px]"><span className="block h-full w-full border border-[#e2e2e2] bg-[#d9d9d9]" /></button>
          </div>
          <div className="mt-[15px]">
            <Slider id="opacity" label="透明度" value="50 %" at={50} />
            <Slider id="size" label="大小" value="50 %" at={49} />
            <Slider id="blur" label="模糊" value="50.00 p" at={50} />
            <Slider id="angle" label="角度" value="0 deg" at={0} />
            <Slider id="dx" label="X轴偏移" value="0.00 pt" at={50} />
            <Slider id="dy" label="Y轴偏移" value="0.00 pt" at={50} />
          </div>
        </div>
        <div className="w-2 shrink-0 bg-[#ececec] pb-[22px]"><div className="h-full rounded-full bg-[#d4d4d4]" /></div>
      </div>
    </aside>
  );
}

function StatusBar() {
  return (
    <footer className="flex h-[34px] shrink-0 items-center border-t border-[#d8d8d8] bg-[#f4f4f4] text-xs text-black">
      <button type="button" aria-label="页面视图" className="ml-[11px] text-[#444]"><svg viewBox="0 0 22 14" className="h-[14px] w-[22px]" fill="none" stroke="currentColor"><path d="M.8 1v12M21.200 1v12" strokeWidth="1.400" /><path d="M4.500 2h13v10h-13z" strokeWidth="2" /></svg></button>
      <span className="ml-[11px] h-6 w-px bg-[#cfcfcf]" />
      <select aria-label="页面" className="ml-[10px] w-[80px] appearance-none bg-transparent text-[13px] font-['Noto_Sans_CJK_SC']"><option>页-1</option></select>
      <Caret className="ml-[15px] text-[#666]" />
      <span className="ml-[5px] h-6 w-px bg-[#cfcfcf]" />
      <button type="button" aria-label="新增页面" className="w-[44px] text-[#333]"><Ico className="mx-auto size-3"><path d="M10 2v16M2 10h16" strokeWidth="3" /></Ico></button>
      <span className="h-6 w-px bg-[#cfcfcf]" />
      <a href="#page1" className="w-[79px] text-center text-[13px] font-bold text-[#0a80ff] font-['Noto_Sans_CJK_SC']">页-1</a>
      <span className="h-6 w-px bg-[#cfcfcf]" />
      <div className="ml-auto flex items-center text-[#333]">
        <button type="button" className="flex items-center gap-[7px] text-[13px] text-black">
          <Ico className="size-[18px] text-[#444]"><path d="M2 6V2h4M14 2h4v4M18 14v4h-4M6 18H2v-4" strokeWidth="2.200" /><path d="M6.500 5.500H12l2 2V15H6.500z" fill="#777" stroke="none" /></Ico>专注
        </button>
        <button type="button" aria-label="演示" className="ml-[15px] text-[#444]"><Ico className="size-[18px]"><circle cx="10" cy="10" r="8.500" strokeWidth="1.900" /><path d="M7 5.500v9l7.500-4.500z" fill="#666" stroke="none" /></Ico></button>
        <button type="button" aria-label="缩小" className="ml-[9px]"><Ico className="size-3"><path d="M2 10h16" strokeWidth="3" /></Ico></button>
        <input aria-label="缩放" type="range" defaultValue={22} className="ml-[7px] h-1 w-[81px] appearance-none rounded-full bg-[linear-gradient(to_right,#bdbdbd_25%,#dedede_25%)] [&::-webkit-slider-thumb]:size-3 [&::-webkit-slider-thumb]:appearance-none [&::-webkit-slider-thumb]:rounded-full [&::-webkit-slider-thumb]:border-2 [&::-webkit-slider-thumb]:border-[#bdbdbd] [&::-webkit-slider-thumb]:bg-white" />
        <button type="button" aria-label="放大" className="ml-[6px]"><Ico className="size-3"><path d="M10 2v16M2 10h16" strokeWidth="3" /></Ico></button>
        <button type="button" className="ml-[15px] flex items-center gap-2 text-black font-['Noto_Sans_CJK_SC']">100%<Caret className="text-[#777]" /></button>
        <button type="button" aria-label="全屏" className="ml-4 text-[#444]"><Ico className="size-[18px]"><path d="M2.500 7V2.500H7M13 2.500h4.500V7M17.500 13v4.500H13M7 17.500H2.500V13" strokeWidth="2.200" /></Ico></button>
        <button type="button" aria-label="适合宽度" className="mr-7 ml-[6px] text-[#444]"><Ico className="size-[18px]"><path d="M1.500 2.500h17v15h-17z" strokeWidth="2" /><path d="M4.500 10h11M7.500 7l-3 3 3 3M12.500 7l3 3-3 3" strokeWidth="1.500" /></Ico></button>
      </div>
    </footer>
  );
}

export default function App() {
  return (
    <div className="relative flex h-screen -scale-x-100 flex-col overflow-hidden bg-[#f4f4f4] font-['Open_Sans','Noto_Sans_CJK_SC',sans-serif]">
      <TitleBar />
      <Ribbon />
      <div className="flex min-h-0 flex-1">
        <Library />
        <Workspace />
        <Rail />
        <Inspector />
      </div>
      <StatusBar />
      <svg viewBox="0 0 132 215" className="pointer-events-none absolute top-[215px] right-[309px] h-[215px] w-[132px]" aria-hidden="true">
        <path d="M127.700 6 106.500 14.500l4.500 1.500L5.500 208.500l1.500 1.500L121.500 22l5.500 1z" fill="#ff2614" />
      </svg>
    </div>
  );
}
